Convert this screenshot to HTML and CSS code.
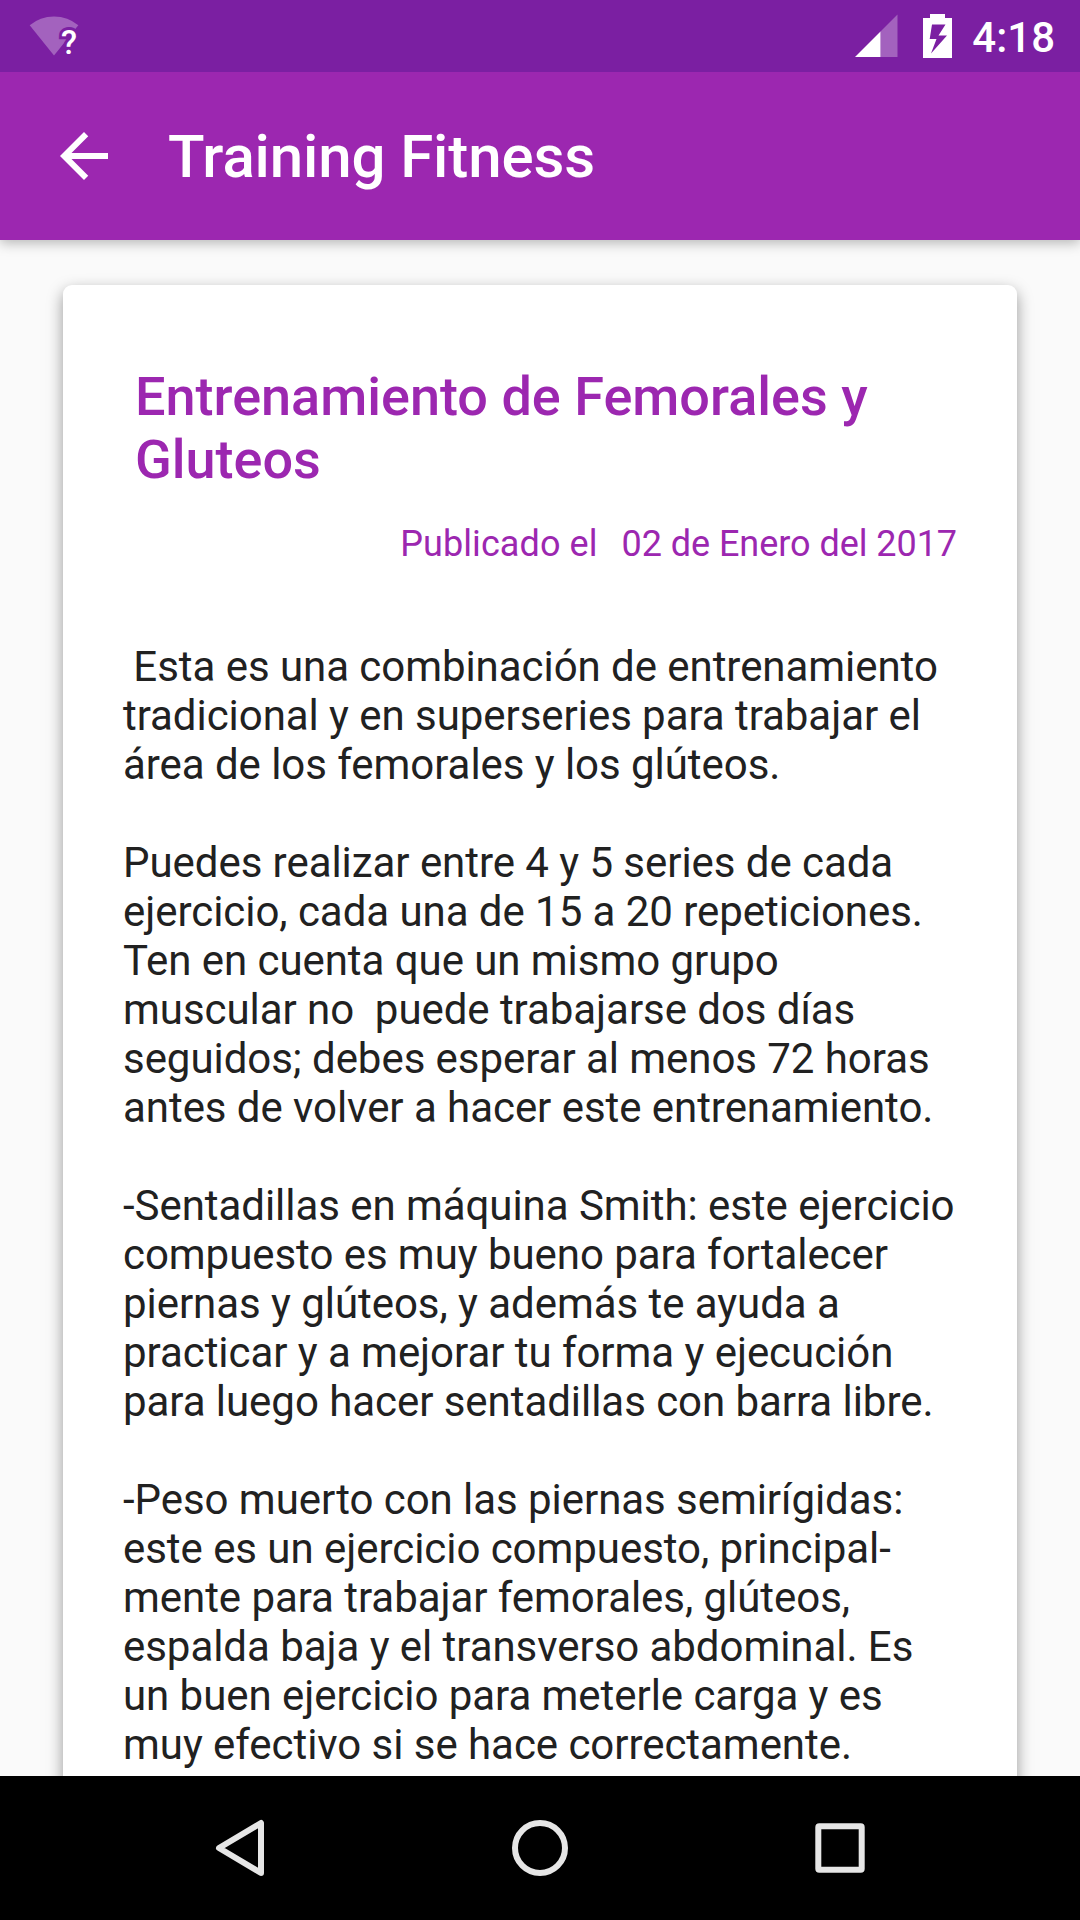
FILE: index.html
```html
<!DOCTYPE html>
<html lang="es">
<head>
<meta charset="utf-8">
<title>Training Fitness</title>
<link rel="stylesheet" href="styles.css">
</head>
<body>
<div class="screen">
  <div class="status-bar">
    <svg class="wifi" width="62" height="57" viewBox="28 10 62 57">
      <path class="dim" d="M54 55.5 29.7 25.3Q40 16.5 54 16.500T78.300 25.300Z"/>
      <text class="wifi-mark" x="61" y="53.700">?</text>
    </svg>
    <svg class="signal" width="43" height="43" viewBox="0 0 43 43">
      <path class="dim" d="M25.500 17.500 42.500.5V43h-17z"/>
      <path fill="#fff" d="M0 43 25.500 17.500V43z"/>
    </svg>
    <svg class="battery" width="29" height="44" viewBox="0 0 29 44">
      <path fill="#fff" fill-rule="evenodd" d="M7 0h15v4h7v40H0V4h7zM9 10.500 6.700 25h6.800L8 39.500 24 21.500h-8.500L22.500 10.500z"/>
    </svg>
    <span class="clock">4:18</span>
  </div>
  <header class="app-bar">
    <svg class="back" width="48" height="48" viewBox="4 4 16 16">
      <path fill="#fff" d="M20 11H7.830l5.590-5.590L12 4l-8 8 8 8 1.410-1.410L7.830 13H20v-2z"/>
    </svg>
    <h1 class="app-title">Training Fitness</h1>
  </header>
  <main class="content">
    <article class="card">
      <h2 class="headline">Entrenamiento de Femorales y<br>Gluteos</h2>
      <div class="published"><span class="label">Publicado el</span><span class="date">02 de Enero del 2017</span></div>
      <div class="body-text"> Esta es una combinación de entrenamiento
tradicional y en superseries para trabajar el
área de los femorales y los glúteos.

Puedes realizar entre 4 y 5 series de cada
ejercicio, cada una de 15 a 20 repeticiones.
Ten en cuenta que un mismo grupo
muscular no  puede trabajarse dos días
seguidos; debes esperar al menos 72 horas
antes de volver a hacer este entrenamiento.

-Sentadillas en máquina Smith: este ejercicio
compuesto es muy bueno para fortalecer
piernas y glúteos, y además te ayuda a
practicar y a mejorar tu forma y ejecución
para luego hacer sentadillas con barra libre.

-Peso muerto con las piernas semirígidas:
este es un ejercicio compuesto, principal-
mente para trabajar femorales, glúteos,
espalda baja y el transverso abdominal. Es
un buen ejercicio para meterle carga y es
muy efectivo si se hace correctamente.</div>
    </article>
  </main>
  <nav class="nav-bar">
    <svg width="60" height="60" viewBox="0 0 60 60"><path d="M51 5v50L9 30z"/></svg>
    <svg width="60" height="60" viewBox="0 0 60 60"><circle cx="30" cy="30" r="25"/></svg>
    <svg width="60" height="60" viewBox="0 0 60 60"><rect x="8.300" y="8.300" width="43.400" height="43.400" rx="1"/></svg>
  </nav>
</div>
</body>
</html>
```

FILE: styles.css
```css
* { box-sizing: border-box; }

body {
  margin: 0;
  font-family: Roboto, sans-serif;
}

.screen {
  display: flex;
  flex-direction: column;
  width: 1080px;
  height: 1920px;
  overflow: hidden;
  background: #fafafa;
}

.status-bar {
  display: flex;
  flex: none;
  align-items: flex-start;
  height: 72px;
  padding: 0 25px 0 28px;
  background: #7b1fa2;
  z-index: 2;
}

.status-bar .dim { fill: #fff; fill-opacity: .3; }

.wifi { margin-top: 10px; }

.wifi-mark {
  font: 500 33px Roboto, sans-serif;
  fill: #fff;
  stroke: #7b1fa2;
  stroke-width: 6px;
  paint-order: stroke;
}

.signal { margin: 14px 25px 0 auto; }

.battery { margin: 14px 20px 0 0; }

.clock {
  margin-top: 13px;
  color: #fff;
  font-size: 42px;
  font-weight: 500;
  line-height: 49px;
}

.app-bar {
  display: flex;
  flex: none;
  align-items: center;
  gap: 60px;
  height: 168px;
  padding: 0 60px;
  background: #9c27b0;
  box-shadow: 0 3px 12px rgba(0, 0, 0, .28);
  z-index: 1;
}

.app-title {
  margin: 2px 0 0;
  color: #fff;
  font-size: 60px;
  font-weight: 500;
  line-height: 70px;
  letter-spacing: -.12px;
}

.content {
  flex: 1;
  min-height: 0;
  padding: 45px 63px 0;
  overflow: hidden;
}

.card {
  height: 1600px;
  padding: 80px 60px 0;
  border-radius: 9px;
  background: #fff;
  box-shadow: 0 6px 16px rgba(0, 0, 0, .4);
}

.headline {
  margin: 0 0 0 12px;
  color: #9c27b0;
  font-size: 54px;
  font-weight: 500;
  line-height: 63px;
}

.published {
  display: flex;
  justify-content: flex-end;
  gap: 24px;
  margin-top: 32px;
  color: #9c27b0;
  font-size: 36px;
  line-height: 42px;
}

.published .label { letter-spacing: .08px; }
.published .date { letter-spacing: -.05px; }

.body-text {
  margin-top: 77px;
  color: #212121;
  font-size: 42px;
  line-height: 49px;
  letter-spacing: -.05px;
  white-space: pre;
}

.nav-bar {
  display: flex;
  flex: none;
  justify-content: center;
  gap: 240px;
  height: 144px;
  padding-top: 42px;
  background: #000;
  z-index: 1;
}

.nav-bar svg {
  fill: none;
  stroke: #e6e6e6;
  stroke-width: 6;
  stroke-linejoin: round;
}
```
